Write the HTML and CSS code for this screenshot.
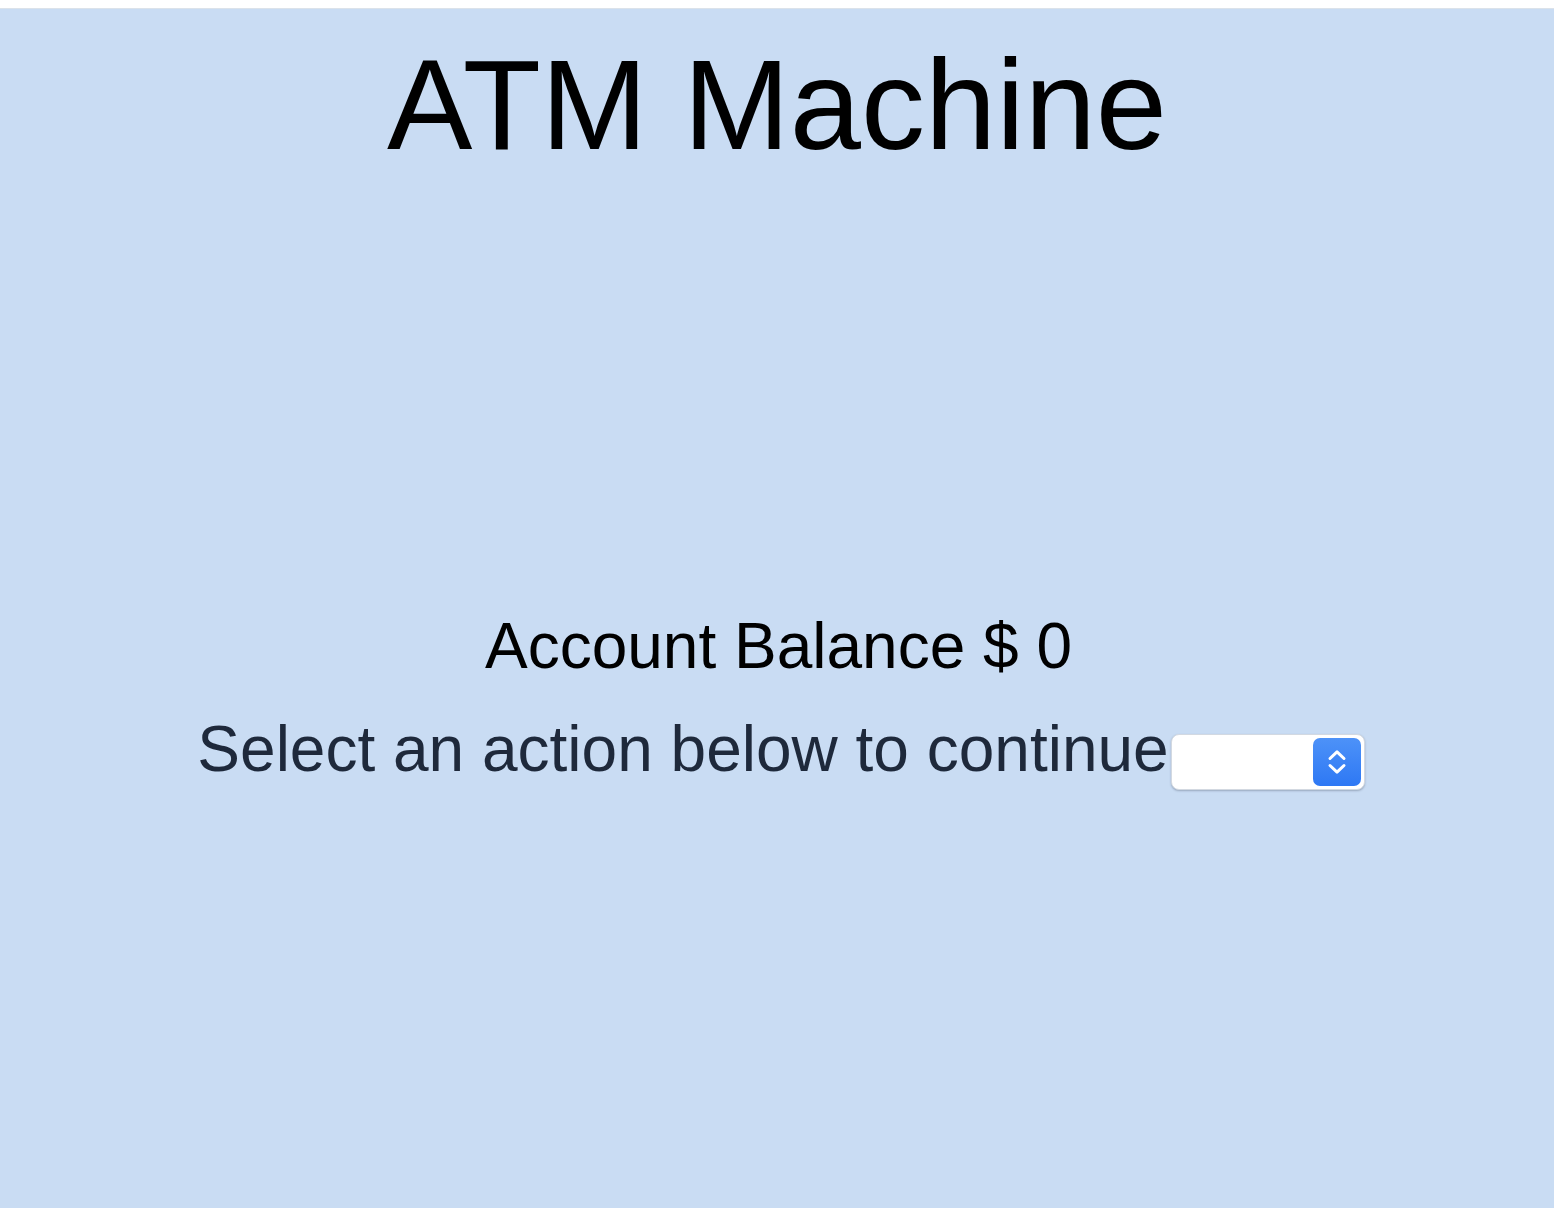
FILE: index.html
```html
<!DOCTYPE html>
<html lang="en">
<head>
<meta charset="utf-8">
<title>ATM Machine</title>
<link rel="stylesheet" href="styles.css">
</head>
<body>
<main class="atm">
  <h1 class="atm-title">ATM Machine</h1>
  <section class="panel">
    <p class="balance">Account Balance $ 0</p>
    <div class="action-row">
      <label class="action-label" for="action">Select an action below to continue</label>
      <span class="select-wrap">
        <select id="action" class="action-select">
          <option value=""></option>
          <option value="deposit">Deposit</option>
          <option value="withdraw">Withdraw</option>
        </select>
        <span class="stepper" aria-hidden="true">
          <svg width="48" height="48" viewBox="0 0 48 48">
            <path d="M17 20.5 L24 13.8 L31 20.5" fill="none" stroke="#fff" stroke-width="3" stroke-linecap="round" stroke-linejoin="round"/>
            <path d="M17 27.5 L24 34.2 L31 27.5" fill="none" stroke="#fff" stroke-width="3" stroke-linecap="round" stroke-linejoin="round"/>
          </svg>
        </span>
      </span>
    </div>
  </section>
</main>
</body>
</html>
```

FILE: styles.css
```css
html, body {
  margin: 0;
  padding: 0;
  background: #ffffff;
}

body {
  padding-top: 8px;
  font-family: "Liberation Sans", Arial, Helvetica, sans-serif;
}

.atm {
  background: #c9dcf3;
  border-top: 1px solid #dbe2ea;
  min-height: 1200px;
  padding-top: 32px;
  box-sizing: border-box;
  text-align: center;
}

.atm-title {
  margin: 0;
  font-size: 128px;
  line-height: 1;
  font-weight: 400;
  color: #000;
}

.panel {
  margin-top: 445px;
}

.balance {
  margin: 0 0 0 3px;
  font-size: 64px;
  line-height: 1;
  color: #000;
}

.action-row {
  margin-top: 39px;
  display: flex;
  justify-content: center;
  align-items: flex-start;
  padding-left: 8px;
}

.action-label {
  font-size: 64px;
  line-height: 1;
  color: #1e293b;
}

.select-wrap {
  position: relative;
  display: inline-block;
  margin-top: 17px;
  margin-left: 2px;
}

.action-select {
  appearance: none;
  -webkit-appearance: none;
  display: block;
  width: 194px;
  height: 56px;
  margin: 0;
  padding: 0 60px 0 12px;
  background: #ffffff;
  border: 1px solid #d3d9e1;
  border-radius: 8px;
  box-shadow: 0 1px 2px rgba(40, 50, 70, 0.3);
  font-family: inherit;
  font-size: 16px;
  color: #000;
  outline: none;
}

.stepper {
  position: absolute;
  right: 4px;
  top: 4px;
  width: 48px;
  height: 48px;
  border-radius: 7px;
  background: linear-gradient(#4d92f8, #2e78f4);
  pointer-events: none;
}

.stepper svg {
  display: block;
}
```
